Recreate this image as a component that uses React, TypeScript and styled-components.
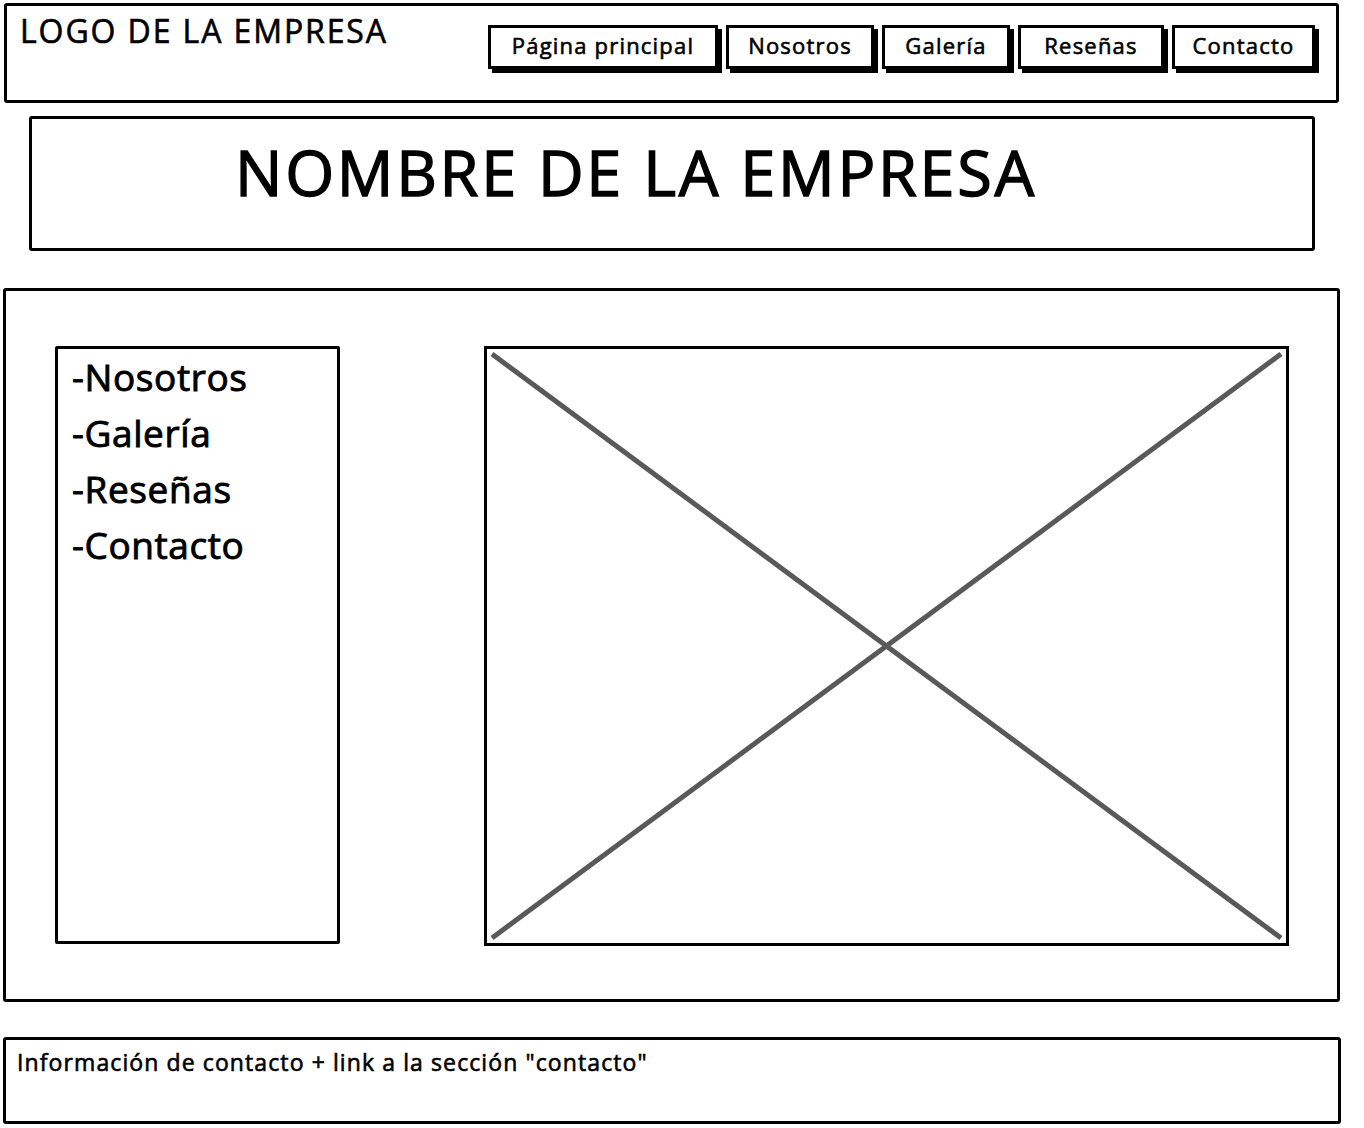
import * as React from "react";
import styled, { createGlobalStyle } from "styled-components";

const GlobalStyle = createGlobalStyle`
  html, body {
    margin: 0;
    padding: 0;
    background: #fff;
  }
  body {
    font-family: "Open Sans", "Noto Sans", sans-serif;
    color: #000;
    -webkit-text-stroke: 0.6px #000;
  }
`;

const ink = "#000";

const SPage = styled.div`
  width: 1364px;
  padding-top: 3px;
  display: flex;
  flex-direction: column;
`;

const SBox = styled.div<{ $left: number; $width: number; $height: number; $top?: number }>`
  box-sizing: border-box;
  margin-left: ${(p) => p.$left}px;
  margin-top: ${(p) => p.$top || 0}px;
  width: ${(p) => p.$width}px;
  height: ${(p) => p.$height}px;
  border: 3px solid ${ink};
  border-radius: 3px;
`;

const SHeader = styled(SBox as any)`
  display: flex;
  justify-content: space-between;
  align-items: flex-start;
  padding: 7px 21px 0 13px;
`;

const SLogo = styled.div`
  font-size: 32px;
  line-height: 36px;
  letter-spacing: 1.9px;
`;

const SNav = styled.nav`
  display: flex;
  gap: 8px;
  margin-top: 12px;
`;

const SNavButton = styled.div<{ $w: number }>`
  box-sizing: border-box;
  width: ${(p) => p.$w}px;
  height: 44px;
  border: 3px solid ${ink};
  box-shadow: 4px 4px 0 ${ink};
  display: flex;
  align-items: center;
  justify-content: center;
  padding-bottom: 4px;
  font-size: 22px;
  letter-spacing: 1.2px;
  background: #fff;
`;

const STitleBox = styled(SBox as any)`
  display: flex;
  align-items: center;
  padding-left: 203px;
  padding-bottom: 24px;
`;

const STitle = styled.h1`
  margin: 0;
  font-weight: 400;
  font-size: 63px;
  letter-spacing: 2.7px;
  -webkit-text-stroke: 1.4px #000;
`;

const SMain = styled(SBox as any)`
  display: flex;
  align-items: flex-start;
  padding: 55px 0 0 49px;
`;

const SSideList = styled.ul`
  box-sizing: border-box;
  list-style: none;
  margin: 0;
  padding: 0 0 0 14px;
  width: 285px;
  height: 598px;
  border: 3px solid ${ink};
  border-radius: 2px;
`;

const SSideItem = styled.li`
  font-size: 37px;
  line-height: 56px;
  letter-spacing: 0.6px;
  -webkit-text-stroke: 0.9px #000;
`;

const SImage = styled.div`
  box-sizing: border-box;
  margin-left: 144px;
  width: 805px;
  height: 600px;
  border: 3px solid ${ink};
`;

const SCross = styled.svg`
  display: block;
  width: 100%;
  height: 100%;
`;

const SFooter = styled(SBox as any)`
  padding: 6px 0 0 11px;
  font-size: 23px;
  letter-spacing: 1.1px;
`;

const navItems = [
  { label: "Página principal", w: 230 },
  { label: "Nosotros", w: 148 },
  { label: "Galería", w: 128 },
  { label: "Reseñas", w: 146 },
  { label: "Contacto", w: 143 },
];

const sideItems = ["-Nosotros", "-Galería", "-Reseñas", "-Contacto"];

const App = () => {
  return (
    <>
      <GlobalStyle />
      <SPage>
        <SHeader $left={4} $width={1335} $height={100}>
          <SLogo>LOGO DE LA EMPRESA</SLogo>
          <SNav>
            {navItems.map((item) => (
              <SNavButton key={item.label} $w={item.w}>
                {item.label}
              </SNavButton>
            ))}
          </SNav>
        </SHeader>

        <STitleBox $left={29} $width={1286} $height={135} $top={13}>
          <STitle>NOMBRE DE LA EMPRESA</STitle>
        </STitleBox>

        <SMain $left={3} $width={1337} $height={714} $top={37}>
          <SSideList>
            {sideItems.map((s) => (
              <SSideItem key={s}>{s}</SSideItem>
            ))}
          </SSideList>
          <SImage>
            <SCross viewBox="0 0 799 594" preserveAspectRatio="none">
              <line x1="5" y1="5" x2="794" y2="589" stroke="#595959" strokeWidth="5" />
              <line x1="794" y1="5" x2="5" y2="589" stroke="#595959" strokeWidth="5" />
            </SCross>
          </SImage>
        </SMain>

        <SFooter $left={3} $width={1338} $height={87} $top={35}>
          Información de contacto + link a la sección "contacto"
        </SFooter>
      </SPage>
    </>
  );
};

export default App;
